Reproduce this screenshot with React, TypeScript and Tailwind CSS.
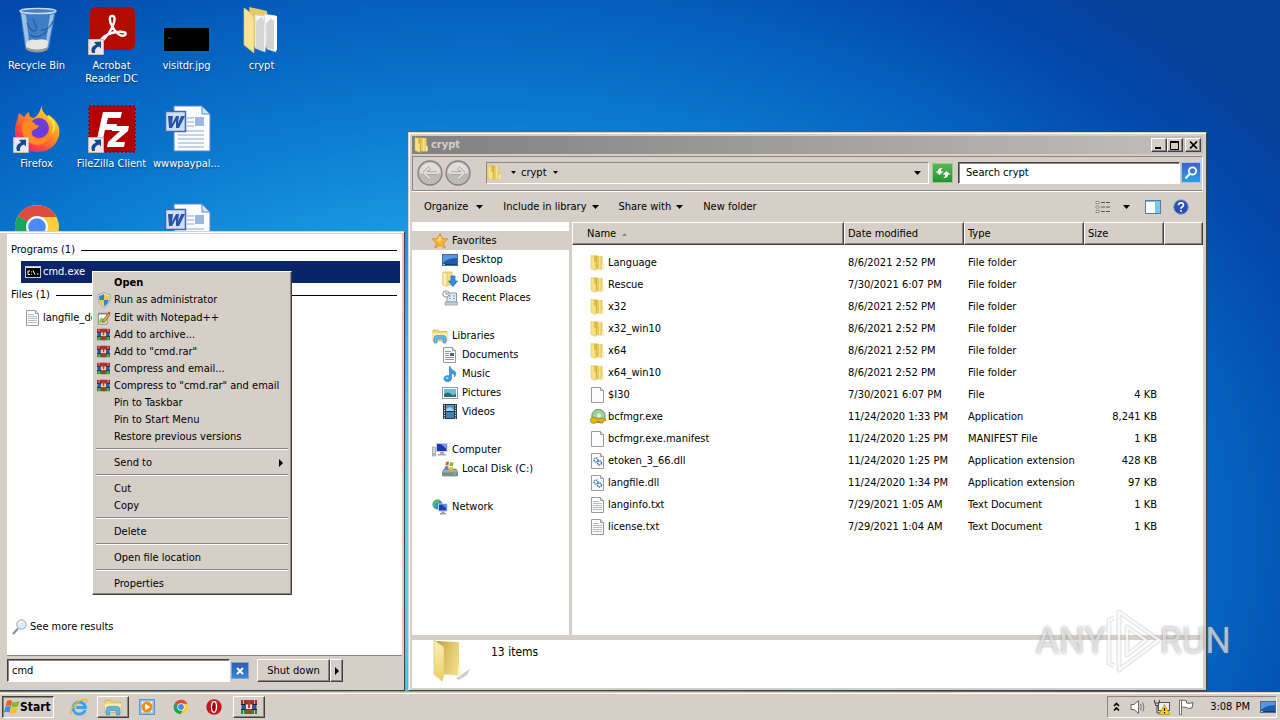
import { useState } from "react";
import type { ReactNode } from "react";

type IconProps = { size?: number };

const RAISED = "border border-t-white border-l-white border-r-[#404040] border-b-[#404040] shadow-[inset_-1px_-1px_0_#8a8680]";
const SUNKEN = "border border-t-[#404040] border-l-[#404040] border-r-white border-b-white shadow-[inset_1px_1px_0_#8a8680]";

/* ---------- icons ---------- */

function RecycleBin() {
  return (
    <svg width="48" height="48" viewBox="0 0 48 48">
      <path d="M7 3 L12 41 Q13 45 24 45 Q34 45 36 41 L43 3 Z" fill="#6fa6d8" fillOpacity="0.55" />
      <path d="M8 6 L13 40 L17 43 L13 8 Z M41 7 L35 40 L32 42 L37 8 Z" fill="#d9ecfa" fillOpacity="0.6" />
      <path d="M14 16 q5 12 10 6 M40 14 q-4 10 -12 9 M17 28 q8 5 17 -4 M20 12 l4 10" fill="none" stroke="#1f5292" strokeWidth="1.500" strokeOpacity="0.7" />
      <path d="M13 36 Q17 31 23 33 Q31 31 35 34 L34 41 Q24 46 13 41 Z" fill="#e6e6e2" />
      <path d="M13 40 Q24 45 35 40 L34 43 Q24 48 14 43 Z" fill="#98989a" />
      <ellipse cx="25" cy="4" rx="18" ry="2.600" fill="#4a83bd" fillOpacity="0.6" stroke="#c9d9e6" strokeWidth="1.500" />
    </svg>
  );
}

function ShortcutArrow() {
  return (
    <svg width="16" height="16" viewBox="0 0 16 16" className="absolute bottom-0 left-0">
      <path d="M0.500 0.500 H15.500 V15.500 H0.500 Z" fill="#e6eaf0" stroke="#c9b9a8" />
      <path d="M4 14 Q1.500 8 8 5.500 L6 3 L13 2.500 L13 9.500 L11 7.500 Q6 9 7 14 Z" fill="#164a8c" />
    </svg>
  );
}

function Acrobat() {
  return (
    <svg width="48" height="48" viewBox="0 0 48 48">
      <rect x="2" y="0" width="45" height="43" rx="6" fill="#b30b00" />
      <path
        d="M24.500 9 C21 8 21 14 24 19 C27 25 33 31 37 28 C41 23 25 24 17 29 C10 34 13 36 17 31 C22 26 27 16 26.500 11 Q26 8.500 24.500 9 Z"
        fill="none" stroke="#fff" strokeWidth="2.400" strokeLinejoin="round"
      />
    </svg>
  );
}

function VisitThumb() {
  return (
    <svg width="48" height="48" viewBox="0 0 48 48">
      <rect x="1" y="21" width="45" height="23" fill="#000" />
      <path d="M5 31 h3" stroke="#8a2a2a" />
    </svg>
  );
}

function OpenFolder() {
  return (
    <svg width="48" height="48" viewBox="0 0 48 48">
      <path d="M11 0 L29 4 L32 41 L16 39 Z" fill="#e6ca68" />
      <path d="M17 8 L31 9 L27 45 L17 41 Z" fill="#f5f5f5" stroke="#cfcfcf" strokeWidth="0.600" />
      <path d="M18 14 L24 10 L26 14 V44 L18 41 Z" fill="#d6d6d6" />
      <path d="M26 7 L38 9 L38 45 L29 42 Z" fill="#f8f8f8" stroke="#c8c8c8" strokeWidth="0.600" />
      <path d="M28 17 L33 11 L36 14 V43 L29 41 Z" fill="#d3d3d3" />
      <path d="M30 8 L39 9 V43 L37 43 L36 14 Z" fill="#fff" />
      <path d="M6 1 L13 6 L16 12 V46 L6 38 Z" fill="#f8e48e" stroke="#dfc566" strokeWidth="0.700" />
    </svg>
  );
}

function Firefox() {
  return (
    <svg width="48" height="48" viewBox="0 0 48 48">
      <defs>
        <linearGradient id="ffx" x1="1" y1="0" x2="0.200" y2="1">
          <stop offset="0.100" stopColor="#fff04a" />
          <stop offset="0.450" stopColor="#ff9524" />
          <stop offset="0.750" stopColor="#ff4a3a" />
          <stop offset="1" stopColor="#e01a82" />
        </linearGradient>
      </defs>
      <path d="M29 0 C28 5 31 8 34 11 L36 10 C44 16 48 22 46 31 C43 42 34 47 24 47 C11 47 2 38 2 26 C2 19 5 14 6 8 L11 12 C14 9 14 8 16 7 C16 11 17 12 20 13 C24 12 27 7 29 0 Z" fill="url(#ffx)" />
      <circle cx="26" cy="23" r="10" fill="#6b3cd6" />
      <path d="M10 17 C16 14 19 15 23 20 C28 20 26 23 20 25 C17 28 19 33 26 34 C31 34 34 31 36 26 C37 38 27 42 19 39 C11 36 7 27 10 17 Z" fill="#ff8a1f" />
      <path d="M29 2 C29 7 33 11 38 16 C41 21 40 26 38 30 C44 25 44 17 36 11 L34 12 C31 9 29 6 29 2 Z" fill="#ffe23c" />
    </svg>
  );
}

function FileZilla() {
  return (
    <svg width="48" height="48" viewBox="0 0 48 48">
      <rect x="1" y="1" width="46" height="46" fill="#b30000" stroke="#8a0000" strokeWidth="1.500" strokeDasharray="2 2" />
      <path d="M15 7 H34 L32.500 13 H20 L18.500 19 H29 L27.500 25 H17 L14 38 H8 Z" fill="#fff" />
      <path d="M25 21 H41 L40 26 L27 37 H37 L36 42 H19 L20 37 L32 26 H24 Z" fill="#fff" />
    </svg>
  );
}

function WordDoc() {
  return (
    <svg width="48" height="48" viewBox="0 0 48 48">
      <path d="M11 1 H39 L47 9 V46 H11 Z" fill="#fafcff" stroke="#5f86c8" />
      <path d="M39 1 V9 H47 Z" fill="#cfe0f7" stroke="#5f86c8" />
      <path d="M24 13 h7 M24 17 h7 M24 21 h7 M15 26 h26 M15 30 h26 M15 34 h26 M15 38 h26 M15 42 h26" stroke="#8ea8d4" />
      <rect x="32" y="12" width="9" height="9" fill="#9db6e2" />
      <rect x="2.500" y="6.500" width="20" height="20" fill="#cfdff5" stroke="#3f66b0" strokeWidth="1.500" />
      <path d="M5 11 h5 l-1 8 4-8 h3 l-1 8 3-8 h4 l-6 12 h-3 l0-7 -4 7 h-3 Z" fill="#2b52a3" />
    </svg>
  );
}

function Chrome({ size = 48 }: IconProps) {
  return (
    <svg width={size} height={size} viewBox="0 0 48 48">
      <circle cx="24" cy="24" r="22" fill="#ffcd40" />
      <path d="M24 24 L5 13 A22 22 0 0 1 43.500 14 H24 Z" fill="#dd4b3e" />
      <path d="M5 13 A22 22 0 0 0 22 46 L32 30 L24 24 Z" fill="#1aa260" />
      <circle cx="24" cy="24" r="11" fill="#fff" />
      <circle cx="24" cy="24" r="8.800" fill="#4b8bf4" />
    </svg>
  );
}

function Folder({ size = 16 }: IconProps) {
  return (
    <svg width={size} height={size} viewBox="0 0 16 16">
      <path d="M3 0.500 H8 V14 H3 Z" fill="#d8b440" />
      <path d="M7 1 H12.500 V8 L13.500 9 V14.500 H7 Z" fill="#e8cb60" />
      <path d="M9 1 H10.500 V14 H9 Z" fill="#f5e395" />
      <path d="M1 0.500 L4.500 1.500 V6 L6 7.500 V15.500 L1 13.500 Z" fill="#f6e283" stroke="#d8ba50" strokeWidth="0.500" />
      <path d="M12 9.500 h1.500 v4.500 h-1.500 Z" fill="#fbf3bd" />
    </svg>
  );
}

function LargeFolder() {
  return (
    <svg width="44" height="44" viewBox="0 0 44 44">
      <defs>
        <linearGradient id="fold-in" x1="0" y1="0" x2="1" y2="0.400">
          <stop offset="0" stopColor="#bf9f3c" />
          <stop offset="0.500" stopColor="#dcc062" />
          <stop offset="1" stopColor="#f0dc86" />
        </linearGradient>
        <linearGradient id="fold-out" x1="0" y1="0" x2="0" y2="1">
          <stop offset="0" stopColor="#faf0b8" />
          <stop offset="1" stopColor="#ecd067" />
        </linearGradient>
      </defs>
      <path d="M24 38 L38 29 L35 35 L27 40 Z" fill="#b9b9b9" fillOpacity="0.7" />
      <path d="M4 1 L27 2 V24 L29 27 V36 L10 34 Z" fill="url(#fold-in)" />
      <path d="M2 0 L9 5 L12 7 V34 L10 41 L2 34 Z" fill="url(#fold-out)" stroke="#dec465" strokeWidth="0.700" />
      <path d="M26 27 L29 24 V36 L26 37 Z" fill="#fcf6cf" />
    </svg>
  );
}

function Page({ kind = "blank" }: { kind?: string }) {
  return (
    <svg width="16" height="16" viewBox="0 0 16 16">
      <path d="M1.500 0.500 H10.500 L13.500 3.500 V15.500 H1.500 Z" fill="#fcfcfc" stroke="#9a9a9a" />
      <path d="M10.500 0.500 V3.500 H13.500" fill="#e8e8e8" stroke="#9a9a9a" />
      {kind === "text" && <path d="M3 4.500 h6 M3 6.500 h9 M3 8.500 h9 M3 10.500 h9 M3 12.500 h9" stroke="#b3bcc0" />}
      {kind === "dll" && (
        <>
          <circle cx="6" cy="7" r="2" fill="none" stroke="#4a83c4" strokeWidth="1.500" strokeDasharray="1.500 0.600" />
          <circle cx="9.500" cy="10" r="2" fill="none" stroke="#3a6fb2" strokeWidth="1.500" strokeDasharray="1.500 0.600" />
        </>
      )}
      {kind === "doc" && (
        <>
          <path d="M3 4.500 h6 M3 6.500 h4 M3 8.500 h4 M3 10.500 h9 M3 12.500 h9" stroke="#7c9cc0" />
          <rect x="8" y="6" width="4" height="3" fill="#2a66a8" />
        </>
      )}
    </svg>
  );
}

function KeyDisk() {
  return (
    <svg width="16" height="16" viewBox="0 0 16 16">
      <circle cx="8.500" cy="7" r="6.700" fill="#9fcf9d" stroke="#5f9c69" />
      <circle cx="9" cy="6.500" r="2" fill="#e7f4e4" />
      <path d="M0.500 11 a3.300 3.300 0 0 1 6-1.500 H15.500 V12 H13 V14 H10 V12.500 H7 a3.400 3.400 0 0 1 -6.500 -1.500 Z" fill="#e7b416" stroke="#a77a05" strokeWidth="0.700" />
    </svg>
  );
}

function Star() {
  return (
    <svg width="16" height="16" viewBox="0 0 16 16">
      <path d="M8 0.500 L10.300 5.500 L15.700 6 L11.600 9.600 L12.900 15 L8 12 L3.100 15 L4.400 9.600 L0.300 6 L5.700 5.500 Z" fill="#ffb52c" stroke="#d9801a" strokeWidth="0.800" />
      <path d="M8 3 L9.500 6.600 L8 9 L5 7 Z" fill="#ffe08a" />
    </svg>
  );
}

function Monitor() {
  return (
    <svg width="16" height="16" viewBox="0 0 16 16">
      <rect x="0.500" y="2.500" width="15" height="11" fill="#1d5bb0" stroke="#4a6a94" />
      <path d="M1 3 H15 V6 Q6 6 1 11 Z" fill="#5596dc" />
      <path d="M1 12.500 h14" stroke="#163a72" />
      <path d="M1 12.500 h2" stroke="#7fe08a" />
    </svg>
  );
}

function Downloads() {
  return (
    <svg width="16" height="16" viewBox="0 0 16 16">
      <path d="M1 1 H10 V14 H1 Z" fill="#f2dc84" stroke="#d3b24f" strokeWidth="0.700" />
      <path d="M1 1 L5 2.500 V15.500 L1 14 Z" fill="#faeeb4" stroke="#d3b24f" strokeWidth="0.500" />
      <path d="M9 5 h4 v5 h2.500 L11 15.500 L6.500 10 H9 Z" fill="#2d8fe0" stroke="#1866ab" strokeWidth="0.700" />
    </svg>
  );
}

function Recent() {
  return (
    <svg width="16" height="16" viewBox="0 0 16 16">
      <path d="M5 3 H14.500 V12 H5 Z" fill="#e4ebf2" stroke="#8997a5" />
      <path d="M7 6 h2 M11 6 h2 M7 8.500 h2 M11 8.500 h2" stroke="#6e9cc8" strokeWidth="1.200" />
      <path d="M3 12 H15.500 V15 H3 Z" fill="#c6ccd2" stroke="#8997a5" strokeWidth="0.700" />
      <circle cx="4" cy="4" r="3.200" fill="#fff" stroke="#8b9198" />
      <path d="M4 2 V4 H6" fill="none" stroke="#444" strokeWidth="0.700" />
    </svg>
  );
}

function Libraries({ size = 16 }: IconProps) {
  return (
    <svg width={size} height={size} viewBox="0 0 16 16">
      <path d="M1 2 H6 L7 3.500 H15 V13 H1 Z" fill="#f1d776" stroke="#cfae4b" strokeWidth="0.700" />
      <path d="M0.500 5 H15.500 L14.500 11 H1 Z" fill="#faebaa" />
      <path d="M2 15 V10 Q2 7.500 5 7.500 H11 Q14 7.500 14 10 V15 H11 V11 H5 V15 Z" fill="#62b5e6" stroke="#3d8fc4" strokeWidth="0.600" />
    </svg>
  );
}

function Music() {
  return (
    <svg width="16" height="16" viewBox="0 0 16 16">
      <path d="M8 0.500 Q9 4 13 5.500 Q14.500 8 12.500 11 Q13 7.500 9.500 7 V12.500 A3.800 3 0 1 1 7.500 10 V0.500 Z" fill="#3a9be0" stroke="#1b6fb8" strokeWidth="0.600" />
      <ellipse cx="5" cy="12" rx="1.500" ry="1" fill="#a9dcfa" />
    </svg>
  );
}

function Pictures() {
  return (
    <svg width="16" height="16" viewBox="0 0 16 16">
      <rect x="0.500" y="2.500" width="15" height="11" fill="#fff" stroke="#8f9aa5" />
      <rect x="2" y="4" width="12" height="8" fill="#67bde6" />
      <path d="M2 9 Q6 6 9 9 T14 8 V12 H2 Z" fill="#2c7266" />
    </svg>
  );
}

function Videos() {
  return (
    <svg width="16" height="16" viewBox="0 0 16 16">
      <rect x="1" y="0" width="14" height="15" fill="#2a3138" />
      <rect x="4" y="1" width="8" height="6" fill="#4e9bcb" />
      <rect x="4" y="8" width="8" height="6" fill="#3d84ba" />
      <path d="M2.500 1 V15 M13.500 1 V15" stroke="#e6e6e6" strokeWidth="1.200" strokeDasharray="1.300 1.200" />
      <path d="M4 5 l4-2 4 3 v1 h-8 Z" fill="#a4d2e8" />
    </svg>
  );
}

function Computer() {
  return (
    <svg width="16" height="16" viewBox="0 0 16 16">
      <rect x="4" y="1" width="11.500" height="9" fill="#c9cfd8" />
      <rect x="5" y="2" width="9.500" height="7" fill="#1f36b8" />
      <path d="M9 2 H14.500 V7 Z" fill="#6f9df0" />
      <path d="M8 10 h4 v2 h2 v1.500 h-8 V12 h2 Z" fill="#a5abb3" />
      <rect x="0.500" y="5" width="3" height="9" fill="#d4d8dd" stroke="#878d95" strokeWidth="0.600" />
      <path d="M1 12 h2" stroke="#3fae3f" />
    </svg>
  );
}

function StartFlag({ size = 16 }: IconProps) {
  return (
    <svg width={size} height={size} viewBox="0 0 16 16">
      <path d="M3 2 Q6 0 8 2 L7 7.500 Q4.500 5.500 1.500 7.500 Z" fill="#ee5a24" />
      <path d="M8.500 2.500 Q12 4 15.500 2 L14 7.500 Q11 9 7.500 7.800 Z" fill="#7cbb2f" />
      <path d="M1.200 8 Q4 6.500 6.800 8 L5.500 13.500 Q3 12 0 13.500 Z" fill="#3b8fdd" />
      <path d="M7.400 8.300 Q10.500 10 13.600 8.300 L12 14 Q9 15.500 6 14 Z" fill="#fbc01e" />
    </svg>
  );
}

function Disk() {
  return (
    <svg width="16" height="16" viewBox="0 0 16 16">
      <path d="M2 8 H14 L15.500 11 V15 H0.500 V11 Z" fill="#a2aab0" stroke="#6d757c" strokeWidth="0.700" />
      <path d="M1 11.500 H15 V14.500 H1 Z" fill="#6f8d86" />
      <path d="M11 13 h3" stroke="#5fe05f" strokeWidth="1.300" />
      <path d="M4 1 Q5.500 0 7 1 L6.500 4.500 Q5 4 3.300 4.500 Z" fill="#ee5a24" />
      <path d="M8 1 Q10 2 11.500 1 L11 4.500 Q9 5.500 7.500 4.500 Z" fill="#7cbb2f" />
      <path d="M3 5.500 Q5 4.500 6.500 5.500 L6 9 Q4 8 2.500 9 Z" fill="#3b8fdd" />
      <path d="M7.400 5.500 Q9.500 6.500 11 5.500 L10.500 9 Q8.500 10 6.800 9 Z" fill="#fbc01e" />
    </svg>
  );
}

function Network() {
  return (
    <svg width="16" height="16" viewBox="0 0 16 16">
      <circle cx="5.500" cy="5.500" r="5" fill="#2f93c8" />
      <path d="M2 2.500 Q5 0 8 1 L6 4 L3 5 L4 8 L1 7 Z" fill="#59c04a" />
      <rect x="6" y="4.500" width="9.500" height="8" fill="#c6ccd4" />
      <rect x="7" y="5.500" width="7.500" height="6" fill="#1c3cc0" />
      <path d="M10 5.500 H14.500 V10 Z" fill="#5b8af0" />
      <path d="M9.500 12.500 h3 v1.500 h1.500 v1.500 h-6 V14 h1.500 Z" fill="#98a0aa" />
    </svg>
  );
}

function Console() {
  return (
    <svg width="16" height="16" viewBox="0 0 16 16">
      <rect x="0.500" y="2.500" width="15" height="11" fill="#000" stroke="#c9c9c9" />
      <path d="M1 3.500 h14" stroke="#dfe6ee" />
      <path d="M5 7 H3 V10.500 H5 M6.500 7.500 v0.800 M6.500 9.800 v0.800 M8 6.500 L10 10.500 M12 10 h1.500" stroke="#fff" fill="none" />
    </svg>
  );
}

function Shield() {
  return (
    <svg width="14" height="16" viewBox="1 0 14 16">
      <path d="M8 0.500 Q11 2.500 14 2.500 Q15 11 8 15.500 Q1 11 2 2.500 Q5 2.500 8 0.500 Z" fill="#e9eef4" stroke="#8798ac" strokeWidth="0.800" />
      <path d="M8 2 Q5.500 3.600 3.200 3.700 L3.200 8 H8 Z M8 8 H12.800 Q12 11.800 8 14.200 Z" fill="#2f7fd6" />
      <path d="M8 2 Q10.500 3.600 12.800 3.700 L12.800 8 H8 Z M8 8 H3.200 Q4 11.800 8 14.200 Z" fill="#f6cc35" />
    </svg>
  );
}

function NotepadPlus() {
  return (
    <svg width="14" height="14" viewBox="1 0 15 16">
      <path d="M2 3 H12 V15 H2 Z" fill="#fbfbf2" stroke="#7b7b7b" />
      <path d="M3.500 2 v2 M6 2 v2 M8.500 2 v2 M11 2 v2" stroke="#555" />
      <path d="M3 11 Q5 5 8 9 L10 7 V13.500 H3 Z" fill="#7ed04f" />
      <path d="M7 11 L13 3 L15 4.500 L9.500 12 L7 12.500 Z" fill="#f0b548" stroke="#5a3b12" strokeWidth="0.700" />
      <path d="M12.500 2 L14.500 0.500 L16 2.500 L15 4 Z" fill="#d0402f" />
    </svg>
  );
}

function WinRar({ size = 13 }: IconProps) {
  return (
    <svg width={size} height={size} viewBox="0 0 16 16">
      <path d="M0 1 H16 V5.500 H0 Z" fill="#b32138" />
      <path d="M0.500 5.500 H15.500 V10.500 H0.500 Z" fill="#2d52b5" />
      <path d="M0 10.500 H16 V15 H0 Z" fill="#1f8a3c" />
      <path d="M0 5.500 H16 M0 10.500 H16" stroke="#1b1b2e" />
      <path d="M2.500 1 v4 M13.500 1 v4 M2.500 11 v4 M13.500 11 v4" stroke="#e9d9a0" strokeWidth="0.800" />
      <path d="M5.500 1 H10.500 V15 H5.500 Z" fill="#a83a2a" />
      <path d="M4.500 5 H11.500 V10.500 H4.500 Z" fill="#e8e3d4" stroke="#5b2a1a" strokeWidth="0.700" />
      <path d="M7 4 h2 v5 h-2 Z" fill="#c23b22" />
    </svg>
  );
}

function Magnifier() {
  return (
    <svg width="16" height="16" viewBox="0 0 16 16">
      <path d="M6 9.500 L1 15" stroke="#8d8d8d" strokeWidth="2" />
      <circle cx="9.500" cy="5.500" r="4.700" fill="#dceefa" stroke="#9aa8b4" />
      <path d="M6.500 5 Q8 2 11 3" stroke="#fff" fill="none" strokeWidth="1.300" />
    </svg>
  );
}

function InternetExplorer() {
  return (
    <svg width="18" height="18" viewBox="0 0 18 18">
      <path d="M15.200 11.800 A6.200 6 0 1 1 15.400 9.500 H6.200" fill="none" stroke="#3ba3e4" strokeWidth="2.800" />
      <path d="M1.500 16.500 C-2 12 8 1.500 15 1.200 C17.500 1 17 3.500 16 5" fill="none" stroke="#f0b62c" strokeWidth="1.400" />
    </svg>
  );
}

function MediaPlayer() {
  return (
    <svg width="16" height="16" viewBox="0 0 16 16">
      <rect x="0.500" y="0.500" width="15" height="15" fill="#8fbce8" stroke="#5f93c8" />
      <rect x="2.500" y="2.500" width="11" height="11" fill="#fff" stroke="#b7d2ec" />
      <circle cx="8" cy="8" r="5.500" fill="#f28a18" />
      <path d="M6.200 4.800 L11.300 8 L6.200 11.200 Z" fill="#fff" />
    </svg>
  );
}

function Opera() {
  return (
    <svg width="16" height="16" viewBox="0 0 16 16">
      <circle cx="8" cy="8" r="7.700" fill="#c4161c" />
      <path d="M3 4 A7 7 0 0 1 13 4 Q8 1 3 4 Z" fill="#ef7a72" />
      <ellipse cx="8" cy="8" rx="2.500" ry="5.300" fill="#8a0a0e" stroke="#fff" strokeWidth="1.300" />
    </svg>
  );
}

function Caret({ dir = "down" }: { dir?: "down" | "right" }) {
  return dir === "down" ? (
    <svg width="7" height="4" viewBox="0 0 7 4"><path d="M0 0 H7 L3.500 4 Z" /></svg>
  ) : (
    <svg width="4" height="8" viewBox="0 0 4 8"><path d="M0 0 V8 L4 4 Z" /></svg>
  );
}

function SmallCaret() {
  return <svg width="5" height="3" viewBox="0 0 5 3"><path d="M0 0 H5 L2.500 3 Z" /></svg>;
}

/* ---------- desktop ---------- */

type Shortcut = { label: string; icon: ReactNode; link?: boolean };

const desktopColumns: Shortcut[][] = [
  [
    { label: "Recycle Bin", icon: <RecycleBin /> },
    { label: "Firefox", icon: <Firefox />, link: true },
    { label: "", icon: <Chrome /> },
  ],
  [
    { label: "Acrobat Reader DC", icon: <Acrobat />, link: true },
    { label: "FileZilla Client", icon: <FileZilla />, link: true },
  ],
  [
    { label: "visitdr.jpg", icon: <VisitThumb /> },
    { label: "wwwpaypal...", icon: <WordDoc /> },
    { label: "", icon: <WordDoc /> },
  ],
  [{ label: "crypt", icon: <OpenFolder /> }],
];

function DesktopIcons() {
  return (
    <div className="-ml-px flex">
      {desktopColumns.map((col, i) => (
        <div key={i} className="w-[75px]">
          {col.map((s, j) => (
            <div key={j} className="flex h-[98px] flex-col items-center pt-[7px] text-white">
              <div className="relative h-12 w-12 shrink-0">
                {s.icon}
                {s.link && <ShortcutArrow />}
              </div>
              <p className="mt-1 text-center leading-[13px] [text-shadow:0_1px_2px_rgba(0,0,0,0.6)]">{s.label}</p>
            </div>
          ))}
        </div>
      ))}
    </div>
  );
}

/* ---------- start menu ---------- */

function StartMenu() {
  const [query, setQuery] = useState("cmd");
  return (
    <section className="absolute top-[231px] bottom-px left-0 flex w-[405px] flex-col border-t border-r border-b border-t-[#d5cfc8] border-r-[#404040] border-b-[#404040] bg-[#d5cfc8] pt-[2px] pr-[2px] pl-[2px] shadow-[inset_0_1px_0_#fff]">
      <div className="ml-[5px] flex flex-1 flex-col border-b border-[#8a8680] bg-white">
        <div className="mt-2 flex h-4 items-center gap-[6px] pr-[5px] pl-1">
          <h2>Programs (1)</h2>
          <div className="h-px flex-1 bg-black" />
        </div>
        <button className="mt-[3px] mr-[2px] ml-[14px] flex h-[22px] items-center gap-[2px] bg-[#0a246a] pl-1 text-white">
          <Console />
          cmd.exe
        </button>
        <div className="mt-1 flex h-4 items-center gap-[6px] pr-[5px] pl-1">
          <h2>Files (1)</h2>
          <div className="h-px flex-1 bg-black" />
        </div>
        <button className="mt-1 ml-[14px] flex h-[22px] items-center gap-[2px] pl-1">
          <Page kind="text" />
          langfile_de.txt
        </button>
        <a href="#results" className="mt-auto mb-5 ml-[5px] flex h-4 items-center gap-[2px]">
          <Magnifier />
          See more results
        </a>
      </div>
      <div className="flex h-[34px] items-start pt-[3px] pl-[5px]">
        <input
          aria-label="Search programs and files"
          value={query}
          onChange={(e) => setQuery(e.target.value)}
          className={`h-[23px] w-[223px] bg-white pl-1 outline-none ${SUNKEN}`}
        />
        <button aria-label="Clear" onClick={() => setQuery("")} className="mt-[3px] ml-px flex h-[17px] w-[18px] items-center justify-center border border-[#7ea4d8] bg-linear-to-b from-[#2a5cb8] to-[#3a86d8]">
          <svg width="8" height="8" viewBox="0 0 8 8"><path d="M1 1 L7 7 M7 1 L1 7" stroke="#fff" strokeWidth="2" /></svg>
        </button>
        <button className={`ml-2 h-[23px] w-[73px] ${RAISED}`}>Shut down</button>
        <button aria-label="Shut down options" className={`flex h-[23px] w-[13px] items-center justify-center ${RAISED}`}>
          <Caret dir="right" />
        </button>
      </div>
    </section>
  );
}

type MenuEntry = { label: string; icon?: ReactNode; bold?: boolean; sub?: boolean };

const menuGroups: MenuEntry[][] = [
  [
    { label: "Open", bold: true },
    { label: "Run as administrator", icon: <Shield /> },
    { label: "Edit with Notepad++", icon: <NotepadPlus /> },
    { label: "Add to archive...", icon: <WinRar /> },
    { label: 'Add to "cmd.rar"', icon: <WinRar /> },
    { label: "Compress and email...", icon: <WinRar /> },
    { label: 'Compress to "cmd.rar" and email', icon: <WinRar /> },
    { label: "Pin to Taskbar" },
    { label: "Pin to Start Menu" },
    { label: "Restore previous versions" },
  ],
  [{ label: "Send to", sub: true }],
  [{ label: "Cut" }, { label: "Copy" }],
  [{ label: "Delete" }],
  [{ label: "Open file location" }],
  [{ label: "Properties" }],
];

function ContextMenu() {
  return (
    <div role="menu" className={`absolute top-[271px] left-[92px] w-[200px] bg-[#d5cfc8] p-[2px] ${RAISED}`}>
      {menuGroups.map((group, i) => (
        <div key={i}>
          {i > 0 && <div className="mt-[3px] mr-px mb-1 ml-px h-[2px] border-t border-b border-t-[#8a8680] border-b-white" />}
          {group.map((m) => (
            <button
              key={m.label}
              role="menuitem"
              className={`flex w-full items-center whitespace-nowrap ${m.label === "Run as administrator" ? "h-[18px]" : "h-[17px]"}`}
            >
              <span className="flex w-[19px] shrink-0 pl-[2px]">{m.icon}</span>
              <span className={m.bold ? "font-bold" : ""}>{m.label}</span>
              {m.sub && <span className="mr-[6px] ml-auto"><Caret dir="right" /></span>}
            </button>
          ))}
        </div>
      ))}
    </div>
  );
}

/* ---------- explorer ---------- */

const tree = [
  {
    label: "Favorites", icon: <Star />, active: true,
    children: [
      { label: "Desktop", icon: <Monitor /> },
      { label: "Downloads", icon: <Downloads /> },
      { label: "Recent Places", icon: <Recent /> },
    ],
  },
  {
    label: "Libraries", icon: <Libraries />,
    children: [
      { label: "Documents", icon: <Page kind="doc" /> },
      { label: "Music", icon: <Music /> },
      { label: "Pictures", icon: <Pictures /> },
      { label: "Videos", icon: <Videos /> },
    ],
  },
  { label: "Computer", icon: <Computer />, children: [{ label: "Local Disk (C:)", icon: <Disk /> }] },
  { label: "Network", icon: <Network />, children: [] },
];

const files = [
  { name: "Language", date: "8/6/2021 2:52 PM", type: "File folder", size: "" },
  { name: "Rescue", date: "7/30/2021 6:07 PM", type: "File folder", size: "" },
  { name: "x32", date: "8/6/2021 2:52 PM", type: "File folder", size: "" },
  { name: "x32_win10", date: "8/6/2021 2:52 PM", type: "File folder", size: "" },
  { name: "x64", date: "8/6/2021 2:52 PM", type: "File folder", size: "" },
  { name: "x64_win10", date: "8/6/2021 2:52 PM", type: "File folder", size: "" },
  { name: "$I30", date: "7/30/2021 6:07 PM", type: "File", size: "4 KB" },
  { name: "bcfmgr.exe", date: "11/24/2020 1:33 PM", type: "Application", size: "8,241 KB" },
  { name: "bcfmgr.exe.manifest", date: "11/24/2020 1:25 PM", type: "MANIFEST File", size: "1 KB" },
  { name: "etoken_3_66.dll", date: "11/24/2020 1:25 PM", type: "Application extension", size: "428 KB" },
  { name: "langfile.dll", date: "11/24/2020 1:34 PM", type: "Application extension", size: "97 KB" },
  { name: "langinfo.txt", date: "7/29/2021 1:05 AM", type: "Text Document", size: "1 KB" },
  { name: "license.txt", date: "7/29/2021 1:04 AM", type: "Text Document", size: "1 KB" },
];

function fileIcon(type: string) {
  if (type === "File folder") return <Folder />;
  if (type === "Application") return <KeyDisk />;
  if (type === "Application extension") return <Page kind="dll" />;
  if (type === "Text Document") return <Page kind="text" />;
  return <Page />;
}

function NavArrow({ back = false }: { back?: boolean }) {
  return (
    <svg width="26" height="26" viewBox="0 0 26 26">
      <circle cx="13" cy="13" r="12" fill="#bdbab6" stroke="#85827d" strokeWidth="1.300" />
      <path d="M2.500 13 A10.500 10.500 0 0 1 23.500 13 Q13 16 2.500 13 Z" fill="#e0dedb" />
      <path
        d={back ? "M7 13 L13 7.500 M7 13 L13 18.500 M7.500 13 H20" : "M19 13 L13 7.500 M19 13 L13 18.500 M18.500 13 H6"}
        fill="none" stroke="#a3a09b" strokeWidth="3.600"
      />
      <path
        d={back ? "M7 13 L13 7.500 M7 13 L13 18.500 M7.500 13 H20" : "M19 13 L13 7.500 M19 13 L13 18.500 M18.500 13 H6"}
        fill="none" stroke="#dddbd8" strokeWidth="2.200"
      />
    </svg>
  );
}

function TitleBar() {
  const box = `flex h-[14px] w-4 items-center justify-center bg-[#d5cfc8] ${RAISED}`;
  return (
    <header className="flex h-[18px] items-center bg-linear-to-r from-[#808080] to-[#c2c0bd] pr-[2px] pl-[2px]">
      <Folder />
      <h1 className="ml-px flex-1 font-bold text-[#d5cfc8]">crypt</h1>
      <button aria-label="Minimize" className={box}>
        <svg width="10" height="9" viewBox="0 0 10 9"><path d="M1 7 h6" stroke="#000" strokeWidth="2" /></svg>
      </button>
      <button aria-label="Maximize" className={box}>
        <svg width="10" height="9" viewBox="0 0 10 9"><path d="M0.500 1 V8.500 H8.500 V1" fill="none" stroke="#000" /><path d="M0 1 h9" stroke="#000" strokeWidth="2" /></svg>
      </button>
      <button aria-label="Close" className={`ml-[2px] ${box}`}>
        <svg width="9" height="8" viewBox="0 0 9 8"><path d="M1 0.500 L8 7.500 M8 0.500 L1 7.500" stroke="#000" strokeWidth="1.700" /></svg>
      </button>
    </header>
  );
}

function AddressBar() {
  return (
    <nav className="mt-[2px] flex h-[35px] items-center border border-t-[#8a8680] border-r-white border-b-[#8a8680] border-l-[#8a8680] pb-[2px] pl-1 shadow-[0_1px_0_#fff]">
      <button aria-label="Back" className="-mr-px"><NavArrow back /></button>
      <button aria-label="Forward" className="ml-[3px]"><NavArrow /></button>
      <div className="ml-[15px] flex h-[22px] flex-1 items-center gap-[6px] border border-t-[#8a8680] border-r-white border-b-white border-l-[#8a8680]">
        <Folder />
        <span className="ml-[2px]"><SmallCaret /></span>
        <button className="-ml-px">crypt</button>
        <SmallCaret />
        <button aria-label="Previous locations" className="mr-[7px] ml-auto"><Caret /></button>
      </div>
      <button aria-label="Refresh" className="mx-[3px] flex h-5 w-[21px] items-center justify-center border border-[#8fce8f] bg-linear-to-b from-[#5bb85a] to-[#1f9428]">
        <svg width="16" height="12" viewBox="0 0 16 12">
          <path d="M4.500 8 L0.500 4.500 H3 V3 Q4 0.500 8 1 Q5.500 2 6 4.500 H8.500 Z" fill="#fff" />
          <path d="M11.500 4 L15.500 7.500 H13 V9 Q12 11.500 8 11 Q10.500 10 10 7.500 H7.500 Z" fill="#fff" />
        </svg>
      </button>
      <input aria-label="Search crypt" placeholder="Search crypt" className={`ml-[2px] h-[22px] w-[222px] bg-white pl-[7px] outline-none placeholder:text-black ${SUNKEN}`} />
      <button aria-label="Search" className="mr-px ml-px flex h-[21px] w-5 items-center justify-center border border-[#a9c4ea] bg-linear-to-b from-[#3c5fd0] to-[#2aa0e4]">
        <svg width="14" height="14" viewBox="0 0 14 14">
          <circle cx="8.500" cy="5" r="3.600" fill="none" stroke="#fff" strokeWidth="1.800" />
          <path d="M5.800 7.800 L1.500 12.500" stroke="#fff" strokeWidth="2.200" />
        </svg>
      </button>
    </nav>
  );
}

function Toolbar() {
  return (
    <div className="flex h-[31px] items-center pr-[14px] pl-3">
      <button className="flex items-center gap-2">Organize <Caret /></button>
      <button className="ml-5 flex items-center gap-[5px]">Include in library <Caret /></button>
      <button className="ml-5 flex items-center gap-[5px]">Share with <Caret /></button>
      <button className="ml-5">New folder</button>
      <button aria-label="Change view" className="ml-auto flex items-center gap-3">
        <svg width="16" height="14" viewBox="0 0 16 14">
          <path d="M1 1.500 h3 v2 h-3 Z M1 6 h3 v2 h-3 Z M1 10.500 h3 v2 h-3 Z" fill="#fff" stroke="#777" strokeWidth="0.800" />
          <path d="M6 2.500 h4 M11 2.500 h4 M6 7 h4 M11 7 h4 M6 11.500 h4 M11 11.500 h4" stroke="#555" />
        </svg>
        <Caret />
      </button>
      <button aria-label="Preview pane" className="ml-[15px]">
        <svg width="16" height="14" viewBox="0 0 16 14">
          <rect x="0.500" y="0.500" width="15" height="13" fill="#fff" stroke="#4c7fa6" />
          <rect x="10" y="2" width="5" height="11" fill="#7cc8e8" />
          <path d="M1 1.500 h14" stroke="#8db4cf" />
        </svg>
      </button>
      <button aria-label="Help" className="ml-3">
        <svg width="16" height="16" viewBox="0 0 16 16">
          <circle cx="8" cy="8" r="7.300" fill="#2a4fb4" stroke="#8b9dc9" />
          <path d="M5.500 6.200 Q5.500 3.800 8 3.800 Q10.500 3.800 10.500 6 Q10.500 7.200 9 8 Q8 8.600 8 9.800 M8 11 V12.700" fill="none" stroke="#fff" strokeWidth="1.700" />
        </svg>
      </button>
    </div>
  );
}

function Explorer() {
  const th = `bg-[#d5cfc8] p-0 pt-px text-left font-normal ${RAISED}`;
  return (
    <section className="absolute top-[132px] right-[73px] bottom-px left-[408px] flex flex-col border border-t-[#d5cfc8] border-r-[#404040] border-b-[#404040] border-l-[#d5cfc8] bg-[#d5cfc8] p-[3px] pb-[2px] shadow-[inset_1px_1px_0_#fff]">
      <TitleBar />
      <AddressBar />
      <Toolbar />
      <div className="flex min-h-0 flex-1">
        <aside className="mr-[3px] w-[157px] shrink-0 bg-white pt-[9px]">
          {tree.map((node) => (
            <div key={node.label} className="mb-[19px]">
              <button className={`flex h-[19px] w-full items-center gap-1 pt-px pl-5 ${node.active ? "bg-[#d5cfc8]" : ""}`}>
                {node.icon}
                {node.label}
              </button>
              {node.children.map((c) => (
                <button key={c.label} className="flex h-[19px] w-full items-center gap-1 pt-px pl-[30px]">
                  {c.icon}
                  {c.label}
                </button>
              ))}
            </div>
          ))}
        </aside>
        <div className="min-w-0 flex-1 overflow-hidden bg-white">
          <table className="w-full table-fixed border-separate border-spacing-0">
            <colgroup>
              <col className="w-[272px]" />
              <col className="w-[120px]" />
              <col className="w-[120px]" />
              <col className="w-[80px]" />
              <col />
            </colgroup>
            <thead>
              <tr className="h-[23px]">
                <th className={th}>
                  <span className="flex items-center gap-[6px] pl-[14px]">
                    Name
                    <svg width="5" height="3" viewBox="0 0 5 3"><path d="M2.500 0 L5 3 H0 Z" fill="#8a8680" /></svg>
                  </span>
                </th>
                <th className={th}><span className="pl-[3px]">Date modified</span></th>
                <th className={th}><span className="pl-[3px]">Type</span></th>
                <th className={th}><span className="pl-[3px]">Size</span></th>
                <th className={th} aria-label="More" />
              </tr>
            </thead>
            <tbody className="before:block before:h-[6px]">
              {files.map((f) => (
                <tr key={f.name} className="h-[22px]">
                  <td className="p-0 pt-px">
                    <span className="flex items-center gap-[2px] pl-[18px]">
                      {fileIcon(f.type)}
                      {f.name}
                    </span>
                  </td>
                  <td className="p-0 pt-px pl-1 whitespace-nowrap">{f.date}</td>
                  <td className="p-0 pt-px pl-1 whitespace-nowrap">{f.type}</td>
                  <td className="p-0 pt-px pr-[7px] text-right whitespace-nowrap">{f.size}</td>
                  <td className="p-0" />
                </tr>
              ))}
            </tbody>
          </table>
        </div>
      </div>
      <footer className="mt-[5px] flex h-[48px] bg-white pl-5">
        <LargeFolder />
        <p className="mt-[5px] ml-[15px] text-[12px]">13 items</p>
      </footer>
    </section>
  );
}

/* ---------- taskbar ---------- */

function Taskbar() {
  return (
    <footer className="flex h-7 shrink-0 items-center border-t border-[#d5cfc8] bg-[#d5cfc8] pt-px pr-[3px] pl-[2px] shadow-[inset_0_1px_0_#fff]">
      <button className={`flex h-[22px] w-[52px] items-center pl-px text-[12px] font-bold ${SUNKEN}`}>
        <StartFlag />
        Start
      </button>
      <div className="ml-[14px] flex items-center">
        <button aria-label="Internet Explorer" className="flex w-[22px] justify-center"><InternetExplorer /></button>
        <button aria-label="Windows Explorer" className={`ml-[7px] flex h-[22px] w-8 items-center justify-center ${RAISED}`}><Libraries size={18} /></button>
        <button aria-label="Media Player" className="ml-[10px]"><MediaPlayer /></button>
        <button aria-label="Chrome" className="ml-[18px]"><Chrome size={16} /></button>
        <button aria-label="Opera" className="ml-[17px]"><Opera /></button>
        <button aria-label="WinRAR" className={`ml-[11px] flex h-[22px] w-8 items-center justify-center ${RAISED}`}><WinRar size={16} /></button>
      </div>
      <div className="ml-auto flex h-[22px] items-center border border-t-[#8a8680] border-r-white border-b-white border-l-[#8a8680] pl-[5px]">
        <button aria-label="Show hidden icons">
          <svg width="7" height="10" viewBox="0 0 7 10"><path d="M1 4 L3.500 1.500 L6 4 M1 8.500 L3.500 6 L6 8.500" fill="none" stroke="#000" strokeWidth="1.600" /></svg>
        </button>
        <button aria-label="Volume" className="ml-[10px]">
          <svg width="18" height="16" viewBox="0 0 18 16">
            <path d="M1 5.500 h3 L8.500 1.500 V14.500 L4 10.500 h-3 Z" fill="#fff" stroke="#666" />
            <path d="M10.500 5 Q12 8 10.500 11 M12.800 3.500 Q15 8 12.800 12.500" fill="none" stroke="#777" />
          </svg>
        </button>
        <button aria-label="Network" className="ml-[6px]">
          <svg width="16" height="16" viewBox="0 0 16 16">
            <rect x="4.500" y="3.500" width="11" height="8" fill="#eee" stroke="#555" />
            <path d="M0.500 1 V4 H5.500 V1 M1.500 4 V6.500 H4.500 V4 M3 6.500 V14 H7" fill="none" stroke="#444" />
            <path d="M10.500 5.500 L16 15.500 H5 Z" fill="#ffd21f" stroke="#a98500" strokeWidth="0.700" />
            <path d="M10.500 9 V12 M10.500 13 V14.200" stroke="#000" strokeWidth="1.300" />
          </svg>
        </button>
        <button aria-label="Action Center" className="ml-2">
          <svg width="16" height="16" viewBox="0 0 16 16">
            <path d="M1.500 1 V15.500 H3.500 V1 Z" fill="#fff" stroke="#555" strokeWidth="0.800" />
            <path d="M3.500 1.500 Q6 0.500 8.500 1.800 V4 Q11.500 5 15 3.500 L14 9 Q10 10 8 8.500 Q6 7.500 3.500 8.500 Z" fill="#fff" stroke="#555" strokeWidth="0.900" />
          </svg>
        </button>
        <time className="ml-4">3:08 PM</time>
        <button aria-label="Show desktop" className="ml-[10px]"><Monitor /></button>
      </div>
    </footer>
  );
}

function Watermark() {
  return (
    <div className="pointer-events-none absolute right-[49px] bottom-[19px] flex items-center font-['Liberation_Sans_Narrow','Roboto',sans-serif] text-[36px] leading-none text-white/60 [text-shadow:0_0_3px_rgba(110,110,110,0.7)]">
      <span>ANY</span>
      <svg width="54" height="64" viewBox="0 0 54 64" fill="none" strokeLinejoin="round">
        <path d="M13 3 L53 31 L13 61 Z M21 18 L40 31 L21 46 Z M8 9 L3 11 V54 L8 57" stroke="#999" strokeOpacity="0.250" strokeWidth="5" />
        <path d="M13 3 L53 31 L13 61 Z M21 18 L40 31 L21 46 Z M8 9 L3 11 V54 L8 57" stroke="#fff" strokeOpacity="0.750" strokeWidth="2.500" />
      </svg>
      <span>RUN</span>
    </div>
  );
}

export default function App() {
  return (
    <div className="flex h-screen flex-col overflow-hidden font-['DejaVu_Sans_Condensed','DejaVu_Sans',sans-serif] text-[11px] leading-[14px] text-black">
      <main className="relative min-h-0 flex-1 overflow-hidden bg-[radial-gradient(ellipse_900px_640px_at_480px_540px,#62dcf0_0%,#4cc8ec_20%,#1a9ae0_48%,#0a78cf_68%,#0560be_84%,#0349ac_98%,#053f96_112%)]">
        <DesktopIcons />
        <Explorer />
        <StartMenu />
        <ContextMenu />
        <Watermark />
      </main>
      <Taskbar />
    </div>
  );
}
